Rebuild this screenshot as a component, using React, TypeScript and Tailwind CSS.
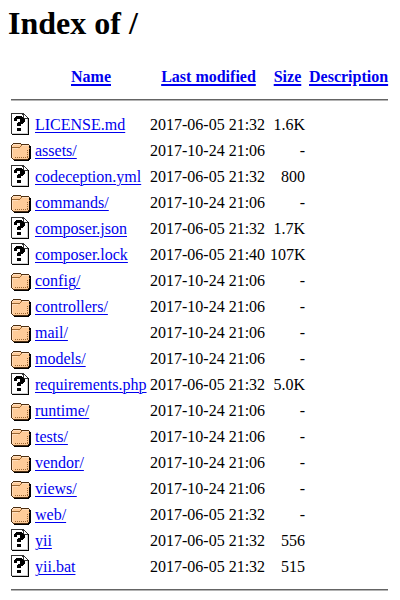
import React from "react";

type Kind = "file" | "folder";

const FILE_ART = [
  "ddddddddddddd.....",
  "dwwwwwwwwwwddd....",
  "dwwwwwwwwwwwdwd...",
  "dwwwwkkkkkkwdwwd..",
  "dwwwkkkkkkkkdwwwd.",
  "dwwkkkkkkkkkkddddk",
  "dwwkkkwwwkkkkkwwgk",
  "dwwkkkwwwkkkkkwwgk",
  "dwwwwwwwwkkkkkwwgk",
  "dwwwwwwkkkkkkwwwgk",
  "dwwwwwkkkkkkwwwwgk",
  "dwwwwwkkkkwwwwwwgk",
  "dwwwwwkkkkwwwwwwgk",
  "dwwwwwwwwwwwwwwwgk",
  "dwwwwwwwwwwwwwwwgk",
  "dwwwwwkkkkwwwwwwgk",
  "dwwwwwkkkkwwwwwwgk",
  "dwwwwwkkkkwwwwwwgk",
  "dwwwwwwwwwwwwwwwgk",
  "dwwwwwwwwwwwwwwwgk",
  "dggggggggggggggggk",
  ".kkkkkkkkkkkkkkkkk",
];

const FOLDER_ART = [
  "....................",
  "....................",
  "....................",
  "....................",
  "..nnnnnnnn..........",
  ".nlllllllonnnnnnnn..",
  "nloooooooobllllllln.",
  "nlooooooobooooooookk",
  "nbbbbbbbboooooooookk",
  "nllllllooooooooooobk",
  "nlooooooooooooooookk",
  "nloooooooooooooobokk",
  "nlooooooooooooooookk",
  "nloooooooooooooobokk",
  "nlooooooooooooooookk",
  "nloooooooooooooobokk",
  "nlooooooooooooooookk",
  "nloooooooooooooobokk",
  "nloobobobobobobobokk",
  ".nooooooooooooooonkk",
  "..nnnnnnnnnnnnnnnkk.",
  "...kkkkkkkkkkkkkkk..",
];

const COLORS: Record<string, string> = {
  d: "#333333",
  w: "#ffffff",
  k: "#000000",
  g: "#cccccc",
  n: "#4d2e10",
  b: "#996633",
  l: "#ffdfbf",
  o: "#ffcc99",
};

function Icon({ kind }: { kind: Kind }) {
  const art = kind === "file" ? FILE_ART : FOLDER_ART;
  return (
    <svg width="20" height="22" viewBox="0 0 20 22" shapeRendering="crispEdges" className="block">
      {art.flatMap((row, y) =>
        row.split("").map((c, x) =>
          c === "." ? null : <rect key={`${x}-${y}`} x={x} y={y} width="1" height="1" fill={COLORS[c]} />
        )
      )}
    </svg>
  );
}

const ROWS: [Kind, string, string, string][] = [
  ["file", "LICENSE.md", "2017-06-05 21:32", "1.6K"],
  ["folder", "assets/", "2017-10-24 21:06", "-"],
  ["file", "codeception.yml", "2017-06-05 21:32", "800"],
  ["folder", "commands/", "2017-10-24 21:06", "-"],
  ["file", "composer.json", "2017-06-05 21:32", "1.7K"],
  ["file", "composer.lock", "2017-06-05 21:40", "107K"],
  ["folder", "config/", "2017-10-24 21:06", "-"],
  ["folder", "controllers/", "2017-10-24 21:06", "-"],
  ["folder", "mail/", "2017-10-24 21:06", "-"],
  ["folder", "models/", "2017-10-24 21:06", "-"],
  ["file", "requirements.php", "2017-06-05 21:32", "5.0K"],
  ["folder", "runtime/", "2017-10-24 21:06", "-"],
  ["folder", "tests/", "2017-10-24 21:06", "-"],
  ["folder", "vendor/", "2017-10-24 21:06", "-"],
  ["folder", "views/", "2017-10-24 21:06", "-"],
  ["folder", "web/", "2017-06-05 21:32", "-"],
  ["file", "yii", "2017-06-05 21:32", "556"],
  ["file", "yii.bat", "2017-06-05 21:32", "515"],
];

const COLS = "grid grid-cols-[20px_112px_115px_35px_79px] gap-x-1 whitespace-nowrap";

function Rule() {
  return <div className="h-0.5 w-[377px] border-t border-b border-t-[#646464] border-b-[#b4b4b4]" />;
}

function Link({ children, bold }: { children: string; bold?: boolean }) {
  return (
    <a
      href="#"
      className={
        bold
          ? "text-[#0000ee] font-bold underline decoration-2 underline-offset-2"
          : "text-[#0000ee] underline decoration-1 underline-offset-2"
      }
    >
      {children}
    </a>
  );
}

export default function App() {
  return (
    <div className="h-[600px] w-[400px] overflow-hidden bg-white pl-[11px] font-['Liberation_Serif','Times_New_Roman',serif] text-[16px] leading-[18px] text-black">
      <h1 className="-ml-[3px] pt-[5px] text-[32px] leading-[36px] font-bold">Index of /</h1>
      <div className={`${COLS} mt-[27px] text-center`}>
        <span />
        <Link bold>Name</Link>
        <Link bold>Last modified</Link>
        <Link bold>Size</Link>
        <Link bold>Description</Link>
      </div>
      <div className="pt-[13px] pb-3">
        <Rule />
      </div>
      <div className="flex flex-col">
        {ROWS.map(([kind, name, date, size]) => (
          <div key={name} className={`${COLS} h-[26px]`}>
            <Icon kind={kind} />
            <span className="pt-[3px]">
              <Link>{name}</Link>
            </span>
            <span className="-ml-px pt-[3px]">{date}</span>
            <span className="pt-[3px] text-right">{size}</span>
            <span />
          </div>
        ))}
      </div>
      <div className="pt-2">
        <Rule />
      </div>
    </div>
  );
}
